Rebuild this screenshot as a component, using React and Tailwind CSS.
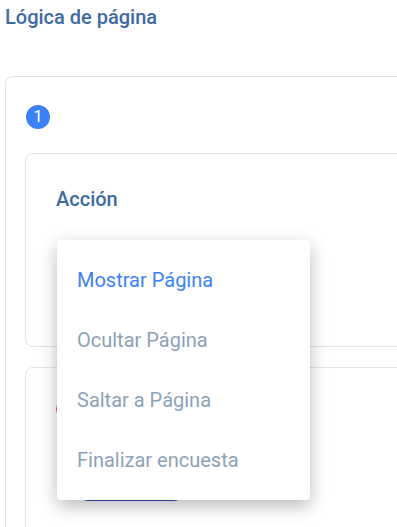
import React from 'react';

const options = ['Mostrar Página', 'Ocultar Página', 'Saltar a Página', 'Finalizar encuesta'];

const App = () => {
  return (
    <div className="relative w-[397px] h-[527px] overflow-hidden bg-white font-['Roboto',sans-serif]">
      <h2 className="pl-[5px] pt-[3px] text-[20px] leading-[28px] font-medium text-[#3d6aa3]">Lógica de página</h2>

      <div className="ml-[5px] mt-[45px] w-[520px] rounded-lg border border-[#dde5ee] pl-[19px] pt-[28px]">
        <div className="ml-[1px] flex h-6 w-6 items-center justify-center rounded-full bg-[#3b82f6] text-[17px] text-white">
          1
        </div>

        {/* Acción card */}
        <div className="mt-6 h-[194px] rounded-lg border border-[#dde5ee] pl-[30px] pt-[30px]">
          <h3 className="text-[20px] leading-[30px] font-medium text-[#3d6a9e]">Acción</h3>
        </div>

        {/* second card, mostly hidden behind the menu */}
        <div className="mt-5 h-[200px] rounded-lg border border-[#dde5ee] pl-[30px] pt-[31px]">
          <div className="h-5 w-5 rounded-full border-2 border-[#e0603f]" />
          <div className="ml-[24px] mt-[44px] h-[38px] w-[102px] rounded-lg bg-[#2b55b3]" />
        </div>
      </div>

      {/* dropdown */}
      <div className="absolute left-[57px] top-[240px] w-[253px] rounded bg-white py-[10px] shadow-[0_6px_18px_rgba(0,0,0,0.28)]">
        {options.map((opt, i) => (
          <div
            key={opt}
            className={`flex h-[60px] items-center px-5 text-[20px] ${i === 0 ? 'text-[#3b82f6]' : 'text-[#8da2b7]'}`}
          >
            {opt}
          </div>
        ))}
      </div>
    </div>
  );
};

export default App;
